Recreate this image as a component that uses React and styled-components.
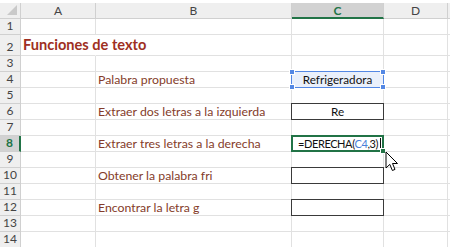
import styled, { createGlobalStyle } from "styled-components";

const GlobalStyle = createGlobalStyle`
  html, body {
    margin: 0;
    padding: 0;
    background: #fff;
    overflow: hidden;
  }
`;

const GRID = "#e1e1e1";
const HEAD_LINE = "#d0d0d0";
const GREEN = "#217346";
const TEXT_RED = "#843c2a";

// Worksheet grid: row header + columns A..D and a sliver of E
const Sheet = styled.div`
  display: grid;
  grid-template-columns: 21px 75px 196px 92px 64px 1fr;
  grid-template-rows: 16px 16px 21px repeat(12, 16px);
  padding-top: 3px;
  width: 450px;
  font-family: Lato, "Open Sans", sans-serif;
`;

const Corner = styled.div`
  position: relative;
  background: #efefef;
  border-right: 1px solid ${HEAD_LINE};
  border-bottom: 1px solid ${HEAD_LINE};

  &::after {
    content: "";
    position: absolute;
    right: 3px;
    bottom: 3px;
    border-style: solid;
    border-width: 0 0 10px 10px;
    border-color: transparent transparent #c9c9c9 transparent;
  }
`;

const ColHead = styled.div`
  display: flex;
  align-items: center;
  justify-content: center;
  background: ${(p) => (p.$active ? "#d2d2d2" : "#efefef")};
  border-right: 1px solid ${HEAD_LINE};
  border-bottom: ${(p) => (p.$active ? `2px solid ${GREEN}` : `1px solid ${HEAD_LINE}`)};
  color: ${(p) => (p.$active ? GREEN : "#444")};
  font-weight: ${(p) => (p.$active ? 700 : 400)};
  font-size: 12px;
  box-sizing: border-box;
`;

const RowHead = styled.div`
  display: flex;
  align-items: flex-end;
  justify-content: center;
  padding-bottom: 1px;
  box-sizing: border-box;
  background: ${(p) => (p.$active ? "#d2d2d2" : "#efefef")};
  border-right: ${(p) => (p.$active ? `2px solid ${GREEN}` : `1px solid ${HEAD_LINE}`)};
  border-bottom: 1px solid ${HEAD_LINE};
  color: ${(p) => (p.$active ? GREEN : "#444")};
  font-weight: ${(p) => (p.$active ? 700 : 400)};
  font-size: 12px;
`;

const frames = {
  thin: "1px solid #3a3a3a",
  active: `2px solid ${GREEN}`,
  ref: "1px solid #5488e4",
};

const Cell = styled.div`
  position: relative;
  display: flex;
  align-items: flex-end;
  justify-content: ${(p) => (p.$center ? "center" : "flex-start")};
  box-sizing: border-box;
  padding: 0 2px 0 ${(p) => (p.$frame === "active" ? "6px" : "2px")};
  white-space: nowrap;
  overflow: visible;
  font-size: 12.3px;
  color: ${TEXT_RED};
  background: ${(p) => (p.$frame === "ref" ? "#eaf0fb" : "transparent")};
  border-right: 1px solid ${(p) => (p.$spill ? "transparent" : GRID)};
  border-bottom: 1px solid ${GRID};

  ${(p) =>
    p.$frame &&
    `
    &::after {
      content: "";
      position: absolute;
      top: -1px;
      left: -1px;
      right: -1px;
      bottom: -1px;
      border: ${frames[p.$frame]};
      pointer-events: none;
    }
  `}
`;

const Title = styled.span`
  font-size: 14.6px;
  font-weight: 700;
  color: #9e2f22;
  line-height: 1;
  padding-bottom: 2px;
`;

const Value = styled.span`
  color: #111;
  font-size: 11.7px;
  padding-bottom: 1px;
  position: relative;
  z-index: 1;
`;

const Formula = styled(Value)`
  font-size: 11px;
  letter-spacing: -0.4px;
`;

const RefPart = styled.span`
  color: #4a7fd8;
`;

const Caret = styled.span`
  display: inline-block;
  width: 1px;
  height: 12px;
  margin-left: 2px;
  background: #111;
  vertical-align: -2px;
`;

// small square handles on the corners of a referenced range
const Handle = styled.span`
  position: absolute;
  width: 4px;
  height: 4px;
  background: #5488e4;
  border: 1px solid #fff;
  z-index: 2;
  ${(p) => (p.$top ? "top: -3px;" : "bottom: -3px;")}
  ${(p) => (p.$left ? "left: -3px;" : "right: -3px;")}
`;

const FillHandle = styled.span`
  position: absolute;
  right: -3px;
  bottom: -3px;
  width: 4px;
  height: 4px;
  background: ${GREEN};
  border: 1px solid #fff;
  z-index: 2;
`;

const Pointer = styled.svg`
  position: absolute;
  left: 93px;
  top: 15px;
  z-index: 5;
`;

const columns = ["A", "B", "C", "D", ""];

const rows = [
  { n: 1 },
  { n: 2, title: "Funciones de texto" },
  { n: 3 },
  { n: 4, label: "Palabra propuesta", c: "Refrigeradora", frame: "ref" },
  { n: 5 },
  { n: 6, label: "Extraer dos letras a la izquierda", c: "Re", frame: "thin" },
  { n: 7 },
  { n: 8, label: "Extraer tres letras a la derecha", formula: true, frame: "active" },
  { n: 9 },
  { n: 10, label: "Obtener la palabra fri", frame: "thin" },
  { n: 11 },
  { n: 12, label: "Encontrar la letra g", frame: "thin" },
  { n: 13 },
  { n: 14 },
];

export default function App() {
  return (
    <>
      <GlobalStyle />
      <Sheet>
        <Corner />
        {columns.map((col, i) => (
          <ColHead key={i} $active={col === "C"}>
            {col}
          </ColHead>
        ))}

        {rows.map((r) => (
          <Row key={r.n} r={r} />
        ))}
      </Sheet>
    </>
  );
}

function Row({ r }) {
  return (
    <>
      <RowHead $active={r.n === 8}>{r.n}</RowHead>
      <Cell $spill={!!r.title}>{r.title && <Title>{r.title}</Title>}</Cell>
      <Cell>{r.label}</Cell>
      <Cell $center={!r.formula} $frame={r.frame}>
        {r.c && <Value>{r.c}</Value>}
        {r.frame === "ref" && (
          <>
            <Handle $top $left />
            <Handle $top />
            <Handle $left />
            <Handle />
          </>
        )}
        {r.formula && (
          <>
            <Formula>
              =DERECHA(<RefPart>C4</RefPart>,3)
              <Caret />
            </Formula>
            <FillHandle />
            <Pointer width="14" height="21" viewBox="0 0 14 21">
              <path
                d="M1 1 L1 17 L4.8 13.4 L7.4 19.5 L10 18.4 L7.5 12.5 L12.5 12.5 Z"
                fill="#fff"
                stroke="#000"
                strokeWidth="1"
                strokeLinejoin="round"
              />
            </Pointer>
          </>
        )}
      </Cell>
      <Cell />
      <Cell />
    </>
  );
}
